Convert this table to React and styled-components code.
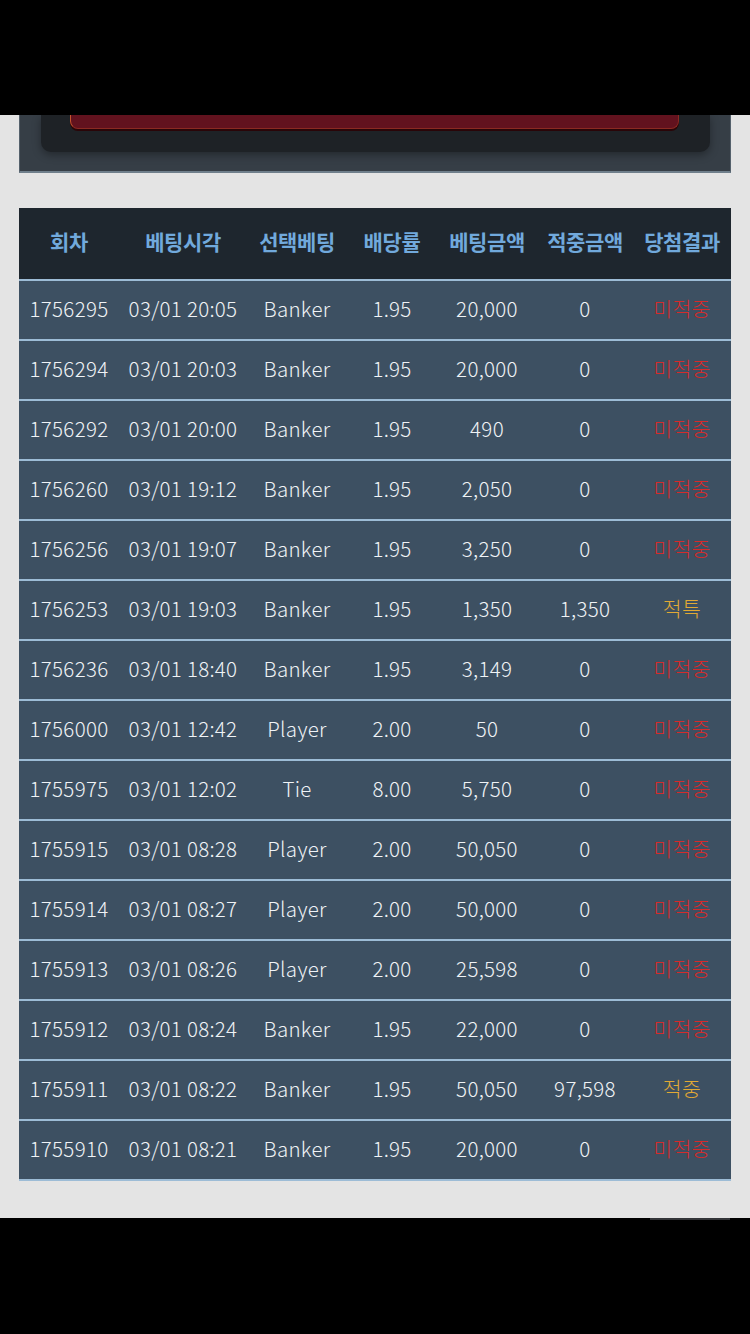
import React from 'react'
import styled, { createGlobalStyle } from 'styled-components'

const Global = createGlobalStyle`
  html, body { margin:0; padding:0; background:#000; }
  body { font-family:"Noto Sans CJK KR", "Noto Sans", sans-serif; }
`

const Screen = styled.div`
  width:750px;
  height:1334px;
  display:flex;
  flex-direction:column;
  background:#000;
  overflow:hidden;
`
const TopBar = styled.div`
  height:115px;
  flex:none;
  background:#000;
`
const BottomBar = styled.div`
  flex:1;
  background:#000;
  display:flex;
  justify-content:flex-end;
  align-items:flex-start;
  padding-right:20px;
`
const FootTab = styled.div`
  width:80px;
  height:2px;
  background:#333538;
`
const Content = styled.div`
  height:1103px;
  flex:none;
  background:#e4e4e4;
  display:flex;
  flex-direction:column;
  padding:0 19px;
`
const Panel = styled.div`
  background:#363e46;
  border-left:1px solid #55616c;
  border-right:1px solid #55616c;
  border-bottom:2px solid #6f7f8b;
  padding:0 20px 19px 21px;
`
const Card = styled.div`
  background:#1e2226;
  border-radius:0 0 10px 10px;
  box-shadow:0 3px 8px rgba(0,0,0,0.35);
  padding:0 31px 23px 29px;
`
const RedButton = styled.div`
  height:13px;
  background:#62121e;
  border:1px solid #8a2a22;
  border-top:none;
  border-left-color:#c4552e;
  border-radius:0 0 8px 8px;
  box-shadow:0 2px 0 #2a0508;
`
const Table = styled.div`
  margin-top:35px;
  display:flex;
  flex-direction:column;
  border-bottom:2px solid #9dbcd6;
`
const Row = styled.div`
  display:grid;
  grid-template-columns:100px 128px 100px 90px 100px 96px 98px;
  height:${p => p.$head ? '71px' : '58px'};
  background:${p => p.$head ? '#1e262e' : '#3d5062'};
  border-top:${p => p.$head ? 'none' : '2px solid #9dbcd6'};
`
const Cell = styled.div`
  display:flex;
  align-items:center;
  justify-content:center;
  white-space:nowrap;
  padding-bottom:5px;
  font-size:20.5px;
  font-weight:300;
  color:#f0f3f6;
  letter-spacing:0.3px;
`
const HeadCell = styled(Cell)`
  font-size:21px;
  font-weight:700;
  color:#71a9dc;
  letter-spacing:-0.4px;
`
const Result = styled(Cell)`
  color:${p => p.$win ? '#e2a934' : '#d52b2b'};
`

const heads = ['회차', '베팅시각', '선택베팅', '배당률', '베팅금액', '적중금액', '당첨결과']

const rows = [
  ['1756295', '03/01 20:05', 'Banker', '1.95', '20,000', '0', '미적중'],
  ['1756294', '03/01 20:03', 'Banker', '1.95', '20,000', '0', '미적중'],
  ['1756292', '03/01 20:00', 'Banker', '1.95', '490', '0', '미적중'],
  ['1756260', '03/01 19:12', 'Banker', '1.95', '2,050', '0', '미적중'],
  ['1756256', '03/01 19:07', 'Banker', '1.95', '3,250', '0', '미적중'],
  ['1756253', '03/01 19:03', 'Banker', '1.95', '1,350', '1,350', '적특'],
  ['1756236', '03/01 18:40', 'Banker', '1.95', '3,149', '0', '미적중'],
  ['1756000', '03/01 12:42', 'Player', '2.00', '50', '0', '미적중'],
  ['1755975', '03/01 12:02', 'Tie', '8.00', '5,750', '0', '미적중'],
  ['1755915', '03/01 08:28', 'Player', '2.00', '50,050', '0', '미적중'],
  ['1755914', '03/01 08:27', 'Player', '2.00', '50,000', '0', '미적중'],
  ['1755913', '03/01 08:26', 'Player', '2.00', '25,598', '0', '미적중'],
  ['1755912', '03/01 08:24', 'Banker', '1.95', '22,000', '0', '미적중'],
  ['1755911', '03/01 08:22', 'Banker', '1.95', '50,050', '97,598', '적중'],
  ['1755910', '03/01 08:21', 'Banker', '1.95', '20,000', '0', '미적중'],
]

export default function App() {
  return (
    <Screen>
      <Global />
      <TopBar />
      <Content>
        <Panel>
          <Card>
            <RedButton />
          </Card>
        </Panel>
        <Table>
          <Row $head>
            {heads.map(h => <HeadCell key={h}>{h}</HeadCell>)}
          </Row>
          {rows.map(r => (
            <Row key={r[0]}>
              {r.slice(0, 6).map((v, i) => <Cell key={i}>{v}</Cell>)}
              <Result $win={r[6] !== '미적중'}>{r[6]}</Result>
            </Row>
          ))}
        </Table>
      </Content>
      <BottomBar>
        <FootTab />
      </BottomBar>
    </Screen>
  )
}
